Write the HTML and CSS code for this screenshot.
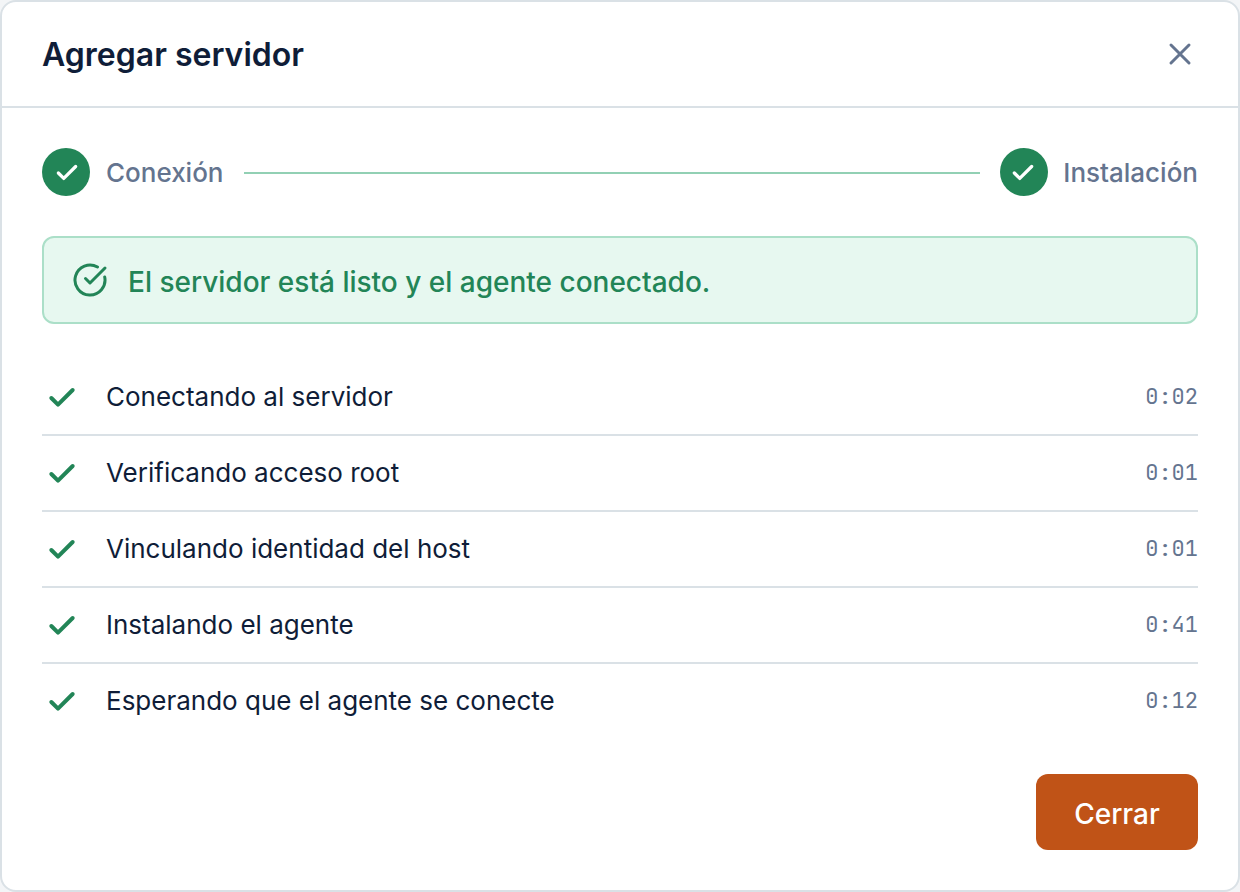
FILE: index.html
```html
<!DOCTYPE html>
<html lang="es">
<head>
    <meta charset="UTF-8">
    <meta name="viewport" content="width=device-width, initial-scale=1.0">
    <title>Agregar servidor</title>
    <link rel="stylesheet" href="styles.css">
</head>
<body>
    <div class="modal">
        <header class="modal-header">
            <h1>Agregar servidor</h1>
            <button class="close-btn" aria-label="Cerrar ventana">
                <svg width="36" height="36" viewBox="0 0 24 24"><path d="M18 6 6 18M6 6l12 12"/></svg>
            </button>
        </header>

        <div class="modal-body">
            <div class="stepper">
                <div class="step">
                    <span class="step-dot"><svg width="26" height="26" viewBox="0 0 24 24"><path d="M20 6 9 17l-5-5"/></svg></span>
                    <span>Conexión</span>
                </div>
                <div class="step-line"></div>
                <div class="step">
                    <span class="step-dot"><svg width="26" height="26" viewBox="0 0 24 24"><path d="M20 6 9 17l-5-5"/></svg></span>
                    <span>Instalación</span>
                </div>
            </div>

            <div class="alert">
                <svg width="36" height="36" viewBox="0 0 24 24"><path d="M21.801 10A10 10 0 1 1 17 3.335"/><path d="m9 11 3 3L22 4"/></svg>
                <span>El servidor está listo y el agente conectado.</span>
            </div>

            <ul class="tasks">
                <li>
                    <svg width="32" height="32" viewBox="0 0 24 24"><path d="M20 6 9 17l-5-5"/></svg>
                    <span class="task-name">Conectando al servidor</span>
                    <span class="time">0:02</span>
                </li>
                <li>
                    <svg width="32" height="32" viewBox="0 0 24 24"><path d="M20 6 9 17l-5-5"/></svg>
                    <span class="task-name">Verificando acceso root</span>
                    <span class="time">0:01</span>
                </li>
                <li>
                    <svg width="32" height="32" viewBox="0 0 24 24"><path d="M20 6 9 17l-5-5"/></svg>
                    <span class="task-name">Vinculando identidad del host</span>
                    <span class="time">0:01</span>
                </li>
                <li>
                    <svg width="32" height="32" viewBox="0 0 24 24"><path d="M20 6 9 17l-5-5"/></svg>
                    <span class="task-name">Instalando el agente</span>
                    <span class="time">0:41</span>
                </li>
                <li>
                    <svg width="32" height="32" viewBox="0 0 24 24"><path d="M20 6 9 17l-5-5"/></svg>
                    <span class="task-name">Esperando que el agente se conecte</span>
                    <span class="time">0:12</span>
                </li>
            </ul>

            <div class="actions">
                <button class="btn">Cerrar</button>
            </div>
        </div>
    </div>
</body>
</html>
```
FILE: styles.css
```css
:root {
    --text: #0f1d38;
    --muted: #64748f;
    --border: #dae1e6;
    --green: #228557;
    --green-bg: #e7f8f0;
    --green-border: #abdfc8;
    --primary: #c05317;
}

* {
    margin: 0;
    padding: 0;
    box-sizing: border-box;
}

body {
    background: #f3f5f7;
    color: var(--text);
    font-family: Inter, sans-serif;
    font-size: 26px;
}

svg {
    display: block;
    flex-shrink: 0;
    fill: none;
    stroke: currentColor;
    stroke-width: 2;
    stroke-linecap: round;
    stroke-linejoin: round;
}

button {
    border: none;
    font-family: inherit;
    cursor: pointer;
}

.modal {
    height: 892px;
    background: #fff;
    border: 2px solid var(--border);
    border-radius: 16px;
}

.modal-header {
    display: flex;
    align-items: center;
    justify-content: space-between;
    height: 106px;
    padding: 0 40px;
    border-bottom: 2px solid var(--border);
}

h1 {
    font-size: 32px;
    font-weight: 600;
}

.close-btn {
    background: transparent;
    color: var(--muted);
}

.modal-body {
    padding: 40px;
}

.stepper {
    display: flex;
    align-items: center;
    gap: 20px;
    margin-bottom: 40px;
    color: var(--muted);
    font-weight: 500;
}

.step {
    display: flex;
    align-items: center;
    gap: 16px;
}

.step:last-child {
    gap: 15.4px;
}

.step-dot {
    display: flex;
    align-items: center;
    justify-content: center;
    width: 48px;
    height: 48px;
    padding: 2px 0 0 2px;
    border-radius: 50%;
    background: var(--green);
    color: #fff;
}

.step:last-child .step-dot {
    padding: 2px 2px 0 0;
}

.step-dot svg {
    stroke-width: 3;
}

.step-line {
    flex: 1;
    height: 2px;
    margin-top: 2px;
    background: #92d0b4;
}

.alert {
    display: flex;
    align-items: center;
    gap: 20px;
    height: 88px;
    margin-bottom: 36px;
    padding: 0 28px;
    background: var(--green-bg);
    border: 2px solid var(--green-border);
    border-radius: 12px;
    color: var(--green);
    font-size: 28px;
    font-weight: 500;
}

.alert span {
    padding-top: 4px;
}

.tasks {
    list-style: none;
}

.tasks li {
    display: flex;
    align-items: center;
    height: 76px;
    padding-left: 4px;
    border-bottom: 2px solid var(--border);
}

.tasks li:last-child {
    height: 74px;
    border-bottom: none;
}

.tasks svg {
    margin-top: 2px;
    color: var(--green);
    stroke-width: 3;
}

.task-name {
    flex: 1;
    margin-left: 28px;
    padding-bottom: 2px;
}

.time {
    padding-bottom: 2px;
    color: var(--muted);
    font-family: "JetBrains Mono", "DejaVu Sans Mono", monospace;
    font-size: 22px;
}

.actions {
    display: flex;
    justify-content: flex-end;
    margin-top: 36px;
}

.btn {
    width: 162px;
    height: 76px;
    padding-top: 4px;
    background: var(--primary);
    border-radius: 12px;
    color: #fff;
    font-size: 28px;
    font-weight: 500;
}
```
